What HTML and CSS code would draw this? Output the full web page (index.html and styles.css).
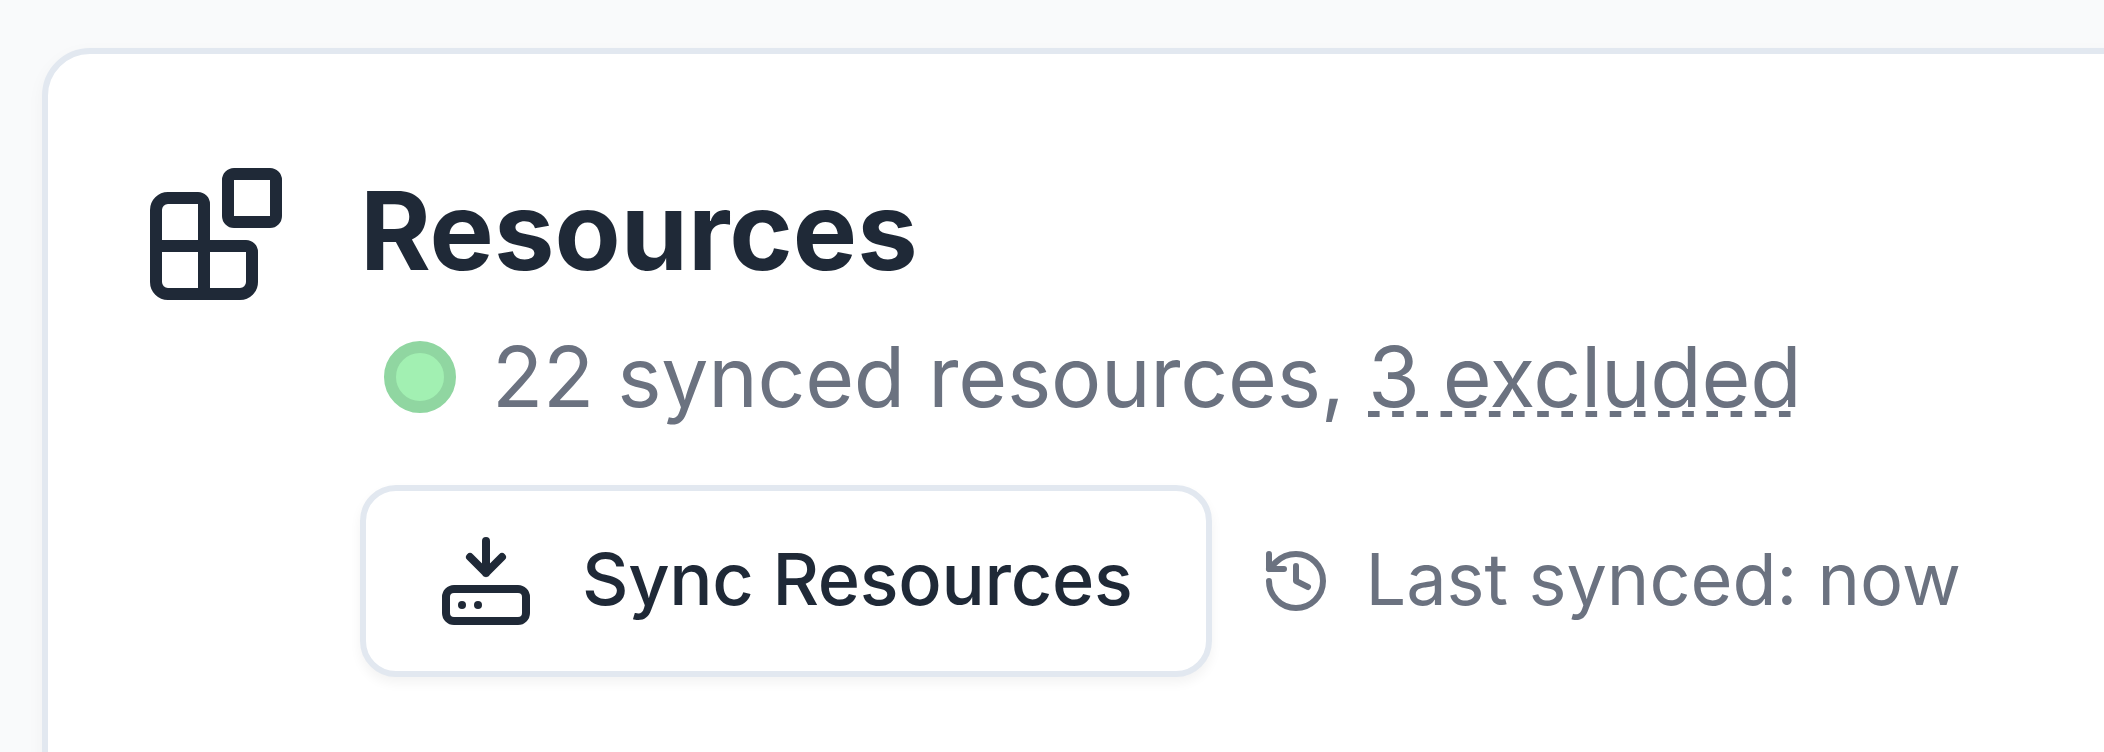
FILE: index.html
```html
<!DOCTYPE html>
<html lang="en">
<head>
    <meta charset="UTF-8">
    <title>Resources</title>
    <link rel="stylesheet" href="styles.css">
</head>
<body>
<div class="page">
    <div class="card">
        <svg class="card-icon" viewBox="150 168 132 132" fill="none" stroke="#1f2937" stroke-width="12">
            <rect x="228" y="174" width="48" height="48" rx="6"/>
            <path d="M204 294V204a6 6 0 0 0-6-6H168a12 12 0 0 0-12 12V282a12 12 0 0 0 12 12H240a12 12 0 0 0 12-12V252a6 6 0 0 0-6-6H156"/>
        </svg>
        <div class="content">
            <h2 class="title">Resources</h2>
            <div class="status">
                <span class="dot"></span>
                <span>22 synced resources, <span class="excluded">3 excluded</span></span>
            </div>
            <div class="actions">
                <button class="sync-btn">
                    <svg class="sync-icon" viewBox="442 538 88 88" fill="none" stroke="#1f2937" stroke-width="8" stroke-linecap="round" stroke-linejoin="round">
                        <rect x="446" y="590" width="80" height="32" rx="8"/>
                        <path d="M486 542V574M470 558L486 574L502 558"/>
                        <circle cx="462" cy="606" r="4" fill="#1f2937" stroke="none"/>
                        <circle cx="478" cy="606" r="4" fill="#1f2937" stroke="none"/>
                    </svg>
                    <span class="btn-label">Sync Resources</span>
                </button>
                <div class="last-synced">
                    <svg class="history-icon" viewBox="0 0 24 24" fill="none" stroke="#6b7280" stroke-width="2" stroke-linecap="round" stroke-linejoin="round">
                        <path d="M3 12a9 9 0 1 0 9-9 9.75 9.75 0 0 0-6.74 2.74L3 8"/>
                        <path d="M3 3v5h5"/>
                        <path d="M12 7v5l4 2"/>
                    </svg>
                    <span class="synced-label">Last synced: now</span>
                </div>
            </div>
        </div>
    </div>
</div>
</body>
</html>
```

FILE: styles.css
```css
* {
    margin: 0;
    padding: 0;
    box-sizing: border-box;
}

body {
    background-color: #f9fafb;
    font-family: Inter, "Liberation Sans", sans-serif;
}

/* the card is wider and taller than the window and gets cut off */
.page {
    height: 752px;
    padding: 48px 0 0 42px;
    overflow: hidden;
}

.card {
    display: flex;
    gap: 78px;
    width: 2400px;
    height: 1000px;
    padding: 114px 0 0 102px;
    background-color: #fff;
    border: 6px solid #e2e8f0;
    border-radius: 48px;
    box-shadow: 0 6px 18px rgba(0, 0, 0, .04);
}

.card-icon {
    width: 132px;
    height: 132px;
    flex-shrink: 0;
}

.title {
    font-size: 108px;
    line-height: 125px;
    font-weight: 700;
    color: #1f2937;
}

.status {
    display: flex;
    align-items: center;
    gap: 36px;
    margin-top: 24px;
    padding-left: 24px;
    font-size: 84px;
    line-height: 120px;
    letter-spacing: -.3px;
    color: #6b7280;
}

.dot {
    width: 72px;
    height: 72px;
    background-color: #a2f0b2;
    border: 12px solid #90d6a1;
    border-radius: 50%;
}

.excluded {
    background-image: linear-gradient(90deg, #6b7280 12px, transparent 12px);
    background-size: 24.18px 6px;
    background-repeat: repeat-x;
    background-position: 0 calc(100% - 10px);
}

.actions {
    display: flex;
    align-items: center;
    gap: 48px;
    margin-top: 48px;
}

.sync-btn {
    display: flex;
    align-items: center;
    gap: 52px;
    height: 192px;
    padding: 0 74px 0 76px;
    background-color: #fff;
    border: 6px solid #e2e8f0;
    border-radius: 36px;
    box-shadow: 0 6px 12px rgba(0, 0, 0, .05);
    font-family: inherit;
    font-size: 72px;
    font-weight: 500;
    letter-spacing: -.3px;
    color: #1f2937;
}

.btn-label,
.synced-label {
    padding-bottom: 6px;
}

.sync-icon {
    width: 88px;
    height: 88px;
}

.last-synced {
    display: flex;
    align-items: center;
    gap: 33px;
    font-size: 72px;
    color: #6b7280;
}

.history-icon {
    width: 72px;
    height: 72px;
}
```
